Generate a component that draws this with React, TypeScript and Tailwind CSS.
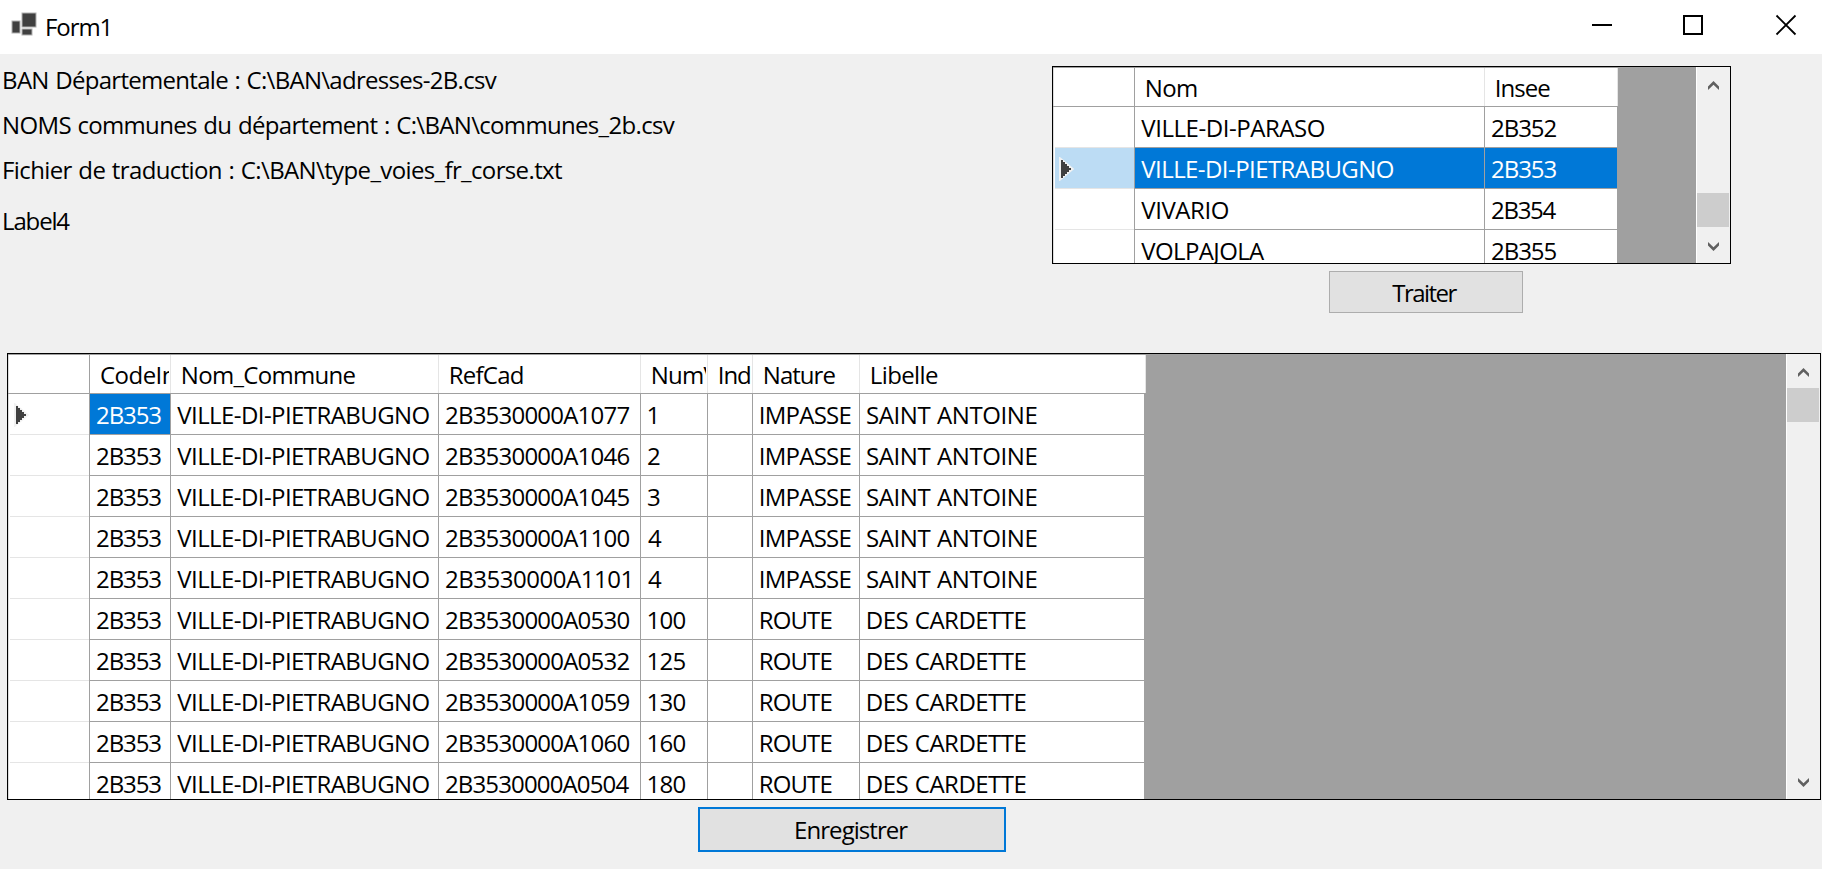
import React, { useMemo } from 'react';

const FONT = '24px "Open Sans"';
const WORD_SPACING = 1;
const canvas = document.createElement('canvas');

function measure(text: string) {
  const ctx = canvas.getContext('2d')!;
  ctx.font = FONT;
  const m = ctx.measureText(text);
  return { left: -m.actualBoundingBoxLeft, ink: m.actualBoundingBoxLeft + m.actualBoundingBoxRight };
}

/** Text whose visible glyphs span exactly `width` pixels; `fit` limits the measured part. */
function Txt({ children, width, fit }: { children: string; width: number; fit?: string }) {
  const style = useMemo(() => {
    const part = fit ?? children;
    const { left, ink } = measure(part);
    const gaps = part.length - 1;
    const spaces = part.split(' ').length - 1;
    const bearing = /^[BDEFILNR]/.test(part) ? 0.8 : 0;
    return {
      letterSpacing: gaps > 0 ? `${(width - bearing - ink - spaces * WORD_SPACING) / gaps}px` : '0px',
      wordSpacing: `${WORD_SPACING}px`,
      marginLeft: `${bearing - left}px`,
    };
  }, [children, width, fit]);
  return (
    <span className="block whitespace-pre" style={style}>
      {children}
    </span>
  );
}

function Chevron({ down = false }: { down?: boolean }) {
  return (
    <svg width="11" height="9" viewBox="0 0 11 9" className={down ? 'rotate-180' : ''}>
      <path d="M0 5.5 5.5 0 11 5.5V9L5.5 3.7 0 9Z" fill="#606060" />
    </svg>
  );
}

function ScrollBar({ children }: { children: React.ReactNode }) {
  return (
    <div className="flex w-[34px] shrink-0 flex-col border-l border-white bg-[#f0f0f0]">
      <div className="flex h-[34px] shrink-0 items-start pl-[11px] pt-[14px]">
        <Chevron />
      </div>
      <div className="flex-1">{children}</div>
      <div className="flex h-[34px] shrink-0 items-start pl-[11px] pt-[13px]">
        <Chevron down />
      </div>
    </div>
  );
}

function RowMarker() {
  return (
    <svg width="16" height="24" viewBox="0 0 16 24" className="mt-[2px]">
      <path d="M2.5 2.5 14 12 2.5 21.5Z" fill="#f2f2f2" stroke="#f2f2f2" strokeWidth="3" />
      <path d="M3 3h2v2h2v2h2v2h2v2h2v2h-2v2H9v2H7v2H5v2H3Z" fill="#404040" />
    </svg>
  );
}

type Cell = { text: string; width: number; pad?: string };

function HeadCell({ w, children }: { w: string; children?: React.ReactNode }) {
  return (
    <div className={`h-full shrink-0 overflow-hidden border-r border-[#e5e5e5] pl-[11px] pr-px leading-[40px] ${w}`}>
      <div className="overflow-hidden">{children}</div>
    </div>
  );
}

function BodyCell({ w, cell, selected }: { w: string; cell: Cell | null; selected?: boolean }) {
  return (
    <div
      className={`h-[41px] shrink-0 overflow-hidden border-b border-r border-[#a0a0a0] leading-[42px] ${w} ${cell?.pad ?? 'pl-[7px]'} ${
        selected ? 'bg-[#0078d7] text-white' : 'bg-white'
      }`}
    >
      {cell && <Txt width={cell.width}>{cell.text}</Txt>}
    </div>
  );
}

function RowHead({ active, selected }: { active?: boolean; selected?: boolean }) {
  return (
    <div className="flex h-[41px] w-[82px] shrink-0 border-l border-r border-l-[#dcdcdc] border-r-[#a0a0a0]">
      <div
        className={`ml-px flex flex-1 items-center border-b border-[#e5e5e5] pl-[3px] ${selected ? 'bg-[#bcdcf4]' : 'bg-white'}`}
      >
        {active && <RowMarker />}
      </div>
    </div>
  );
}

function Corner() {
  return <div className="h-full w-[82px] shrink-0 border-l border-r border-l-[#dcdcdc] border-r-[#a0a0a0]" />;
}

const communes = [
  { nom: 'VILLE-DI-PARASO', w: 183.4, insee: '2B352' },
  { nom: 'VILLE-DI-PIETRABUGNO', w: 252.4, insee: '2B353', selected: true },
  { nom: 'VIVARIO', w: 87.4, insee: '2B354' },
  { nom: 'VOLPAJOLA', w: 123.8, insee: '2B355' },
];

const addresses: [string, string, string, string][] = [
  ['2B3530000A1077', '1', 'IMPASSE', 'SAINT ANTOINE'],
  ['2B3530000A1046', '2', 'IMPASSE', 'SAINT ANTOINE'],
  ['2B3530000A1045', '3', 'IMPASSE', 'SAINT ANTOINE'],
  ['2B3530000A1100', '4', 'IMPASSE', 'SAINT ANTOINE'],
  ['2B3530000A1101', '4', 'IMPASSE', 'SAINT ANTOINE'],
  ['2B3530000A0530', '100', 'ROUTE', 'DES CARDETTE'],
  ['2B3530000A0532', '125', 'ROUTE', 'DES CARDETTE'],
  ['2B3530000A1059', '130', 'ROUTE', 'DES CARDETTE'],
  ['2B3530000A1060', '160', 'ROUTE', 'DES CARDETTE'],
  ['2B3530000A0504', '180', 'ROUTE', 'DES CARDETTE'],
];

function TitleBar() {
  return (
    <header className="flex h-[54px] items-start bg-white">
      <svg width="28" height="26" viewBox="0 0 28 26" className="ml-[10px] mt-[11px]">
        <g fill="#404040" stroke="#b0b0b0" strokeWidth="1">
          <rect x="12" y="2" width="14" height="14" />
          <rect x="2" y="10" width="8" height="12" />
          <rect x="12" y="18" width="10" height="6" />
        </g>
      </svg>
      <div className="ml-[8.2px] leading-[54px]">
        <Txt width={62.4}>Form1</Txt>
      </div>
      <svg width="205" height="22" viewBox="0 0 205 22" className="ml-auto mr-[25px] mt-[14px]" fill="none" stroke="#000" strokeWidth="2">
        <path d="M0 11h20M92 2h18v18H92z" />
        <path d="M184.5 1.5 203.5 20.5M203.5 1.5 184.5 20.5" strokeWidth="1.8" />
      </svg>
    </header>
  );
}

function CommuneGrid() {
  return (
    <div className="flex h-[198px] w-[679px] border border-black bg-[#a0a0a0]">
      <div className="flex flex-1 flex-col overflow-hidden">
        <div className="flex h-10 w-[565px] shrink-0 border-y border-[#a0a0a0] bg-white">
          <Corner />
          <HeadCell w="w-[350px]"><Txt width={51}>Nom</Txt></HeadCell>
          <HeadCell w="w-[133px]"><Txt width={54.2}>Insee</Txt></HeadCell>
        </div>
        {communes.map((c) => (
          <div key={c.insee} className="flex w-[564px] shrink-0 bg-white">
            <RowHead active={c.selected} selected={c.selected} />
            <BodyCell w="w-[350px]" selected={c.selected} cell={{ text: c.nom, width: c.w, pad: 'pl-[6.3px]' }} />
            <BodyCell w="w-[133px]" selected={c.selected} cell={{ text: c.insee, width: 64.5 }} />
          </div>
        ))}
      </div>
      <ScrollBar>
        <div className="mt-[92px] h-[34px] w-8 bg-[#cdcdcd]" />
      </ScrollBar>
    </div>
  );
}

function AddressGrid() {
  return (
    <div className="ml-[7px] flex h-[447px] w-[1814px] border border-black bg-[#a0a0a0]">
      <div className="flex flex-1 flex-col overflow-hidden">
        <div className="flex h-10 w-[1137px] shrink-0 border-y border-[#a0a0a0] bg-white">
          <Corner />
          <HeadCell w="w-[81px]"><Txt width={59.6} fit="CodeI">CodeInsee</Txt></HeadCell>
          <HeadCell w="w-[268px]"><Txt width={173.6}>Nom_Commune</Txt></HeadCell>
          <HeadCell w="w-[202px]"><Txt width={72.7}>RefCad</Txt></HeadCell>
          <HeadCell w="w-[67px]"><Txt width={51} fit="Num">NumVoie</Txt></HeadCell>
          <HeadCell w="w-[45px]"><Txt width={31}>Ind</Txt></HeadCell>
          <HeadCell w="w-[107px]"><Txt width={71.4}>Nature</Txt></HeadCell>
          <HeadCell w="w-[286px]"><Txt width={67}>Libelle</Txt></HeadCell>
        </div>
        {addresses.map(([ref, num, nature, libelle], i) => (
          <div key={ref} className="flex w-[1136px] shrink-0 bg-white">
            <RowHead active={i === 0} />
            <BodyCell w="w-[81px]" selected={i === 0} cell={{ text: '2B353', width: 64.3 }} />
            <BodyCell w="w-[268px]" cell={{ text: 'VILLE-DI-PIETRABUGNO', width: 252.2, pad: 'pl-[6.3px]' }} />
            <BodyCell w="w-[202px]" cell={{ text: ref, width: 183.4 }} />
            <BodyCell w="w-[67px]" cell={{ text: num, width: 37, pad: num.startsWith('1') ? 'pl-[7.6px]' : 'pl-[7px]' }} />
            <BodyCell w="w-[45px]" cell={null} />
            <BodyCell w="w-[107px]" cell={{ text: nature, width: nature === 'ROUTE' ? 71.4 : 90.4 }} />
            <BodyCell w="w-[285px]" cell={{ text: libelle, width: libelle === 'DES CARDETTE' ? 158.5 : 169.4 }} />
          </div>
        ))}
      </div>
      <ScrollBar>
        <div className="h-[34px] w-8 bg-[#cdcdcd]" />
      </ScrollBar>
    </div>
  );
}

export default function App() {
  return (
    <div className="h-[869px] w-[1822px] overflow-hidden bg-[#f0f0f0] font-['Open_Sans',sans-serif] text-[24px] text-black">
      <TitleBar />
      <main>
        <section className="flex h-[299px] justify-between pr-[91px] pt-3">
          <div className="-mt-[9px] flex flex-col pl-[3.3px] leading-[45px]">
            <Txt width={493.4}>BAN Départementale : C:\BAN\adresses-2B.csv</Txt>
            <Txt width={671.4}>NOMS communes du département : C:\BAN\communes_2b.csv</Txt>
            <Txt width={558.7}>Fichier de traduction : C:\BAN\type_voies_fr_corse.txt</Txt>
            <div className="mt-[6px]">
              <Txt width={67}>Label4</Txt>
            </div>
          </div>
          <div>
            <CommuneGrid />
            <button className="ml-[277px] mt-[7px] block h-[42px] w-[194px] border border-[#adadad] bg-[#e1e1e1] pl-[62.2px] text-left leading-[42px]">
              <Txt width={65.4}>Traiter</Txt>
            </button>
          </div>
        </section>
        <AddressGrid />
        <button className="ml-[698px] mt-[7px] block h-[45px] w-[308px] border-2 border-[#0078d7] bg-[#e1e1e1] pl-[95.3px] text-left leading-[42px]">
          <Txt width={113}>Enregistrer</Txt>
        </button>
      </main>
    </div>
  );
}
